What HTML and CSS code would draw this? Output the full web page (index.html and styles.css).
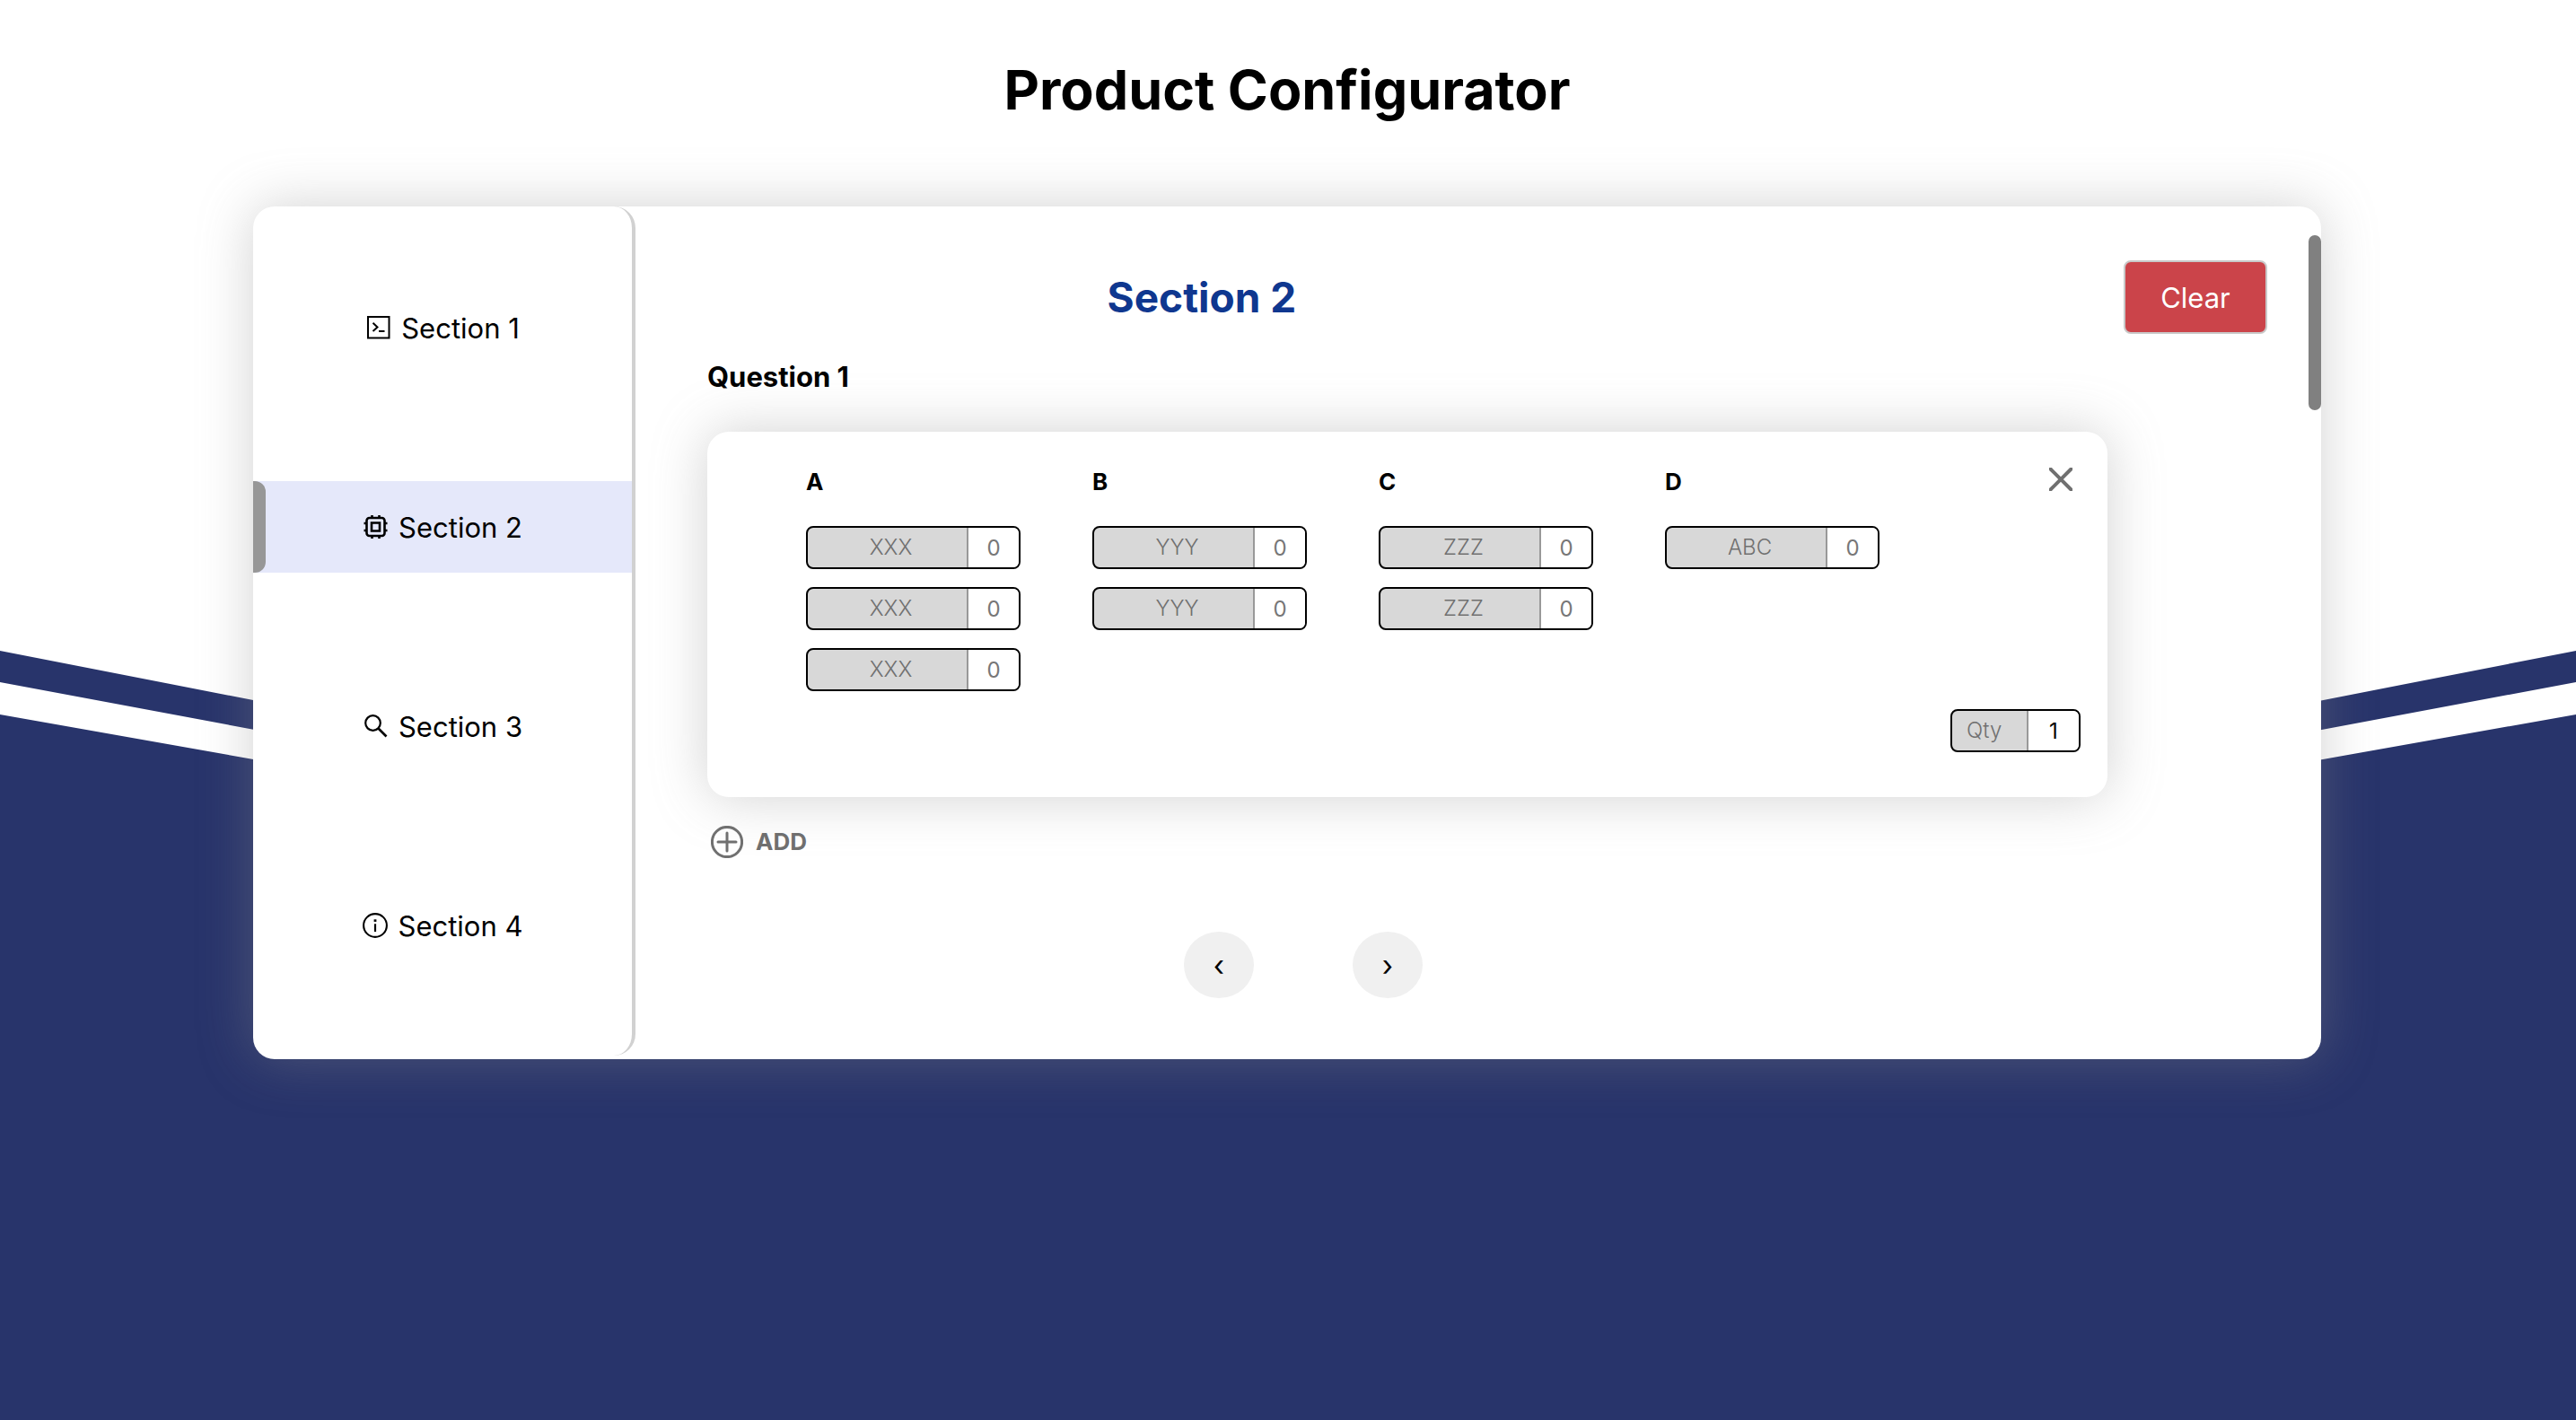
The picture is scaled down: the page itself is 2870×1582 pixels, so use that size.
FILE: index.html
```html
<!DOCTYPE html>
<html lang="en">
<head>
<meta charset="utf-8">
<meta name="viewport" content="width=device-width, initial-scale=1">
<title>Product Configurator</title>
<link rel="stylesheet" href="styles.css">
</head>
<body>
<svg class="backdrop" viewBox="0 0 2870 1582" preserveAspectRatio="none" aria-hidden="true">
  <path d="M0 725 1435 1005 2870 725V760L1435 1028 0 760ZM0 796 1435 1050 2870 796V1582H0Z"/>
</svg>
<main class="page">
  <h1 class="page-title">Product Configurator</h1>
  <div class="configurator">
    <nav class="sidebar" aria-label="Sections">
      <a class="nav-item" href="#section-1">
        <svg class="icon" viewBox="0 0 28 28"><path d="M3 2h23.500v23.500H3z" stroke-width="2"/><path d="M8.500 8.800 13.500 13.400 8.500 18" stroke-width="2"/><path d="M15 18h6.500" stroke-width="2"/></svg>
        Section 1
      </a>
      <a class="nav-item active" href="#section-2" aria-current="page">
        <svg class="icon" viewBox="0 0 28 28"><rect x="4.500" y="4" width="20" height="20" rx="3" stroke-width="2.600"/><path d="M10 9.500h9v9h-9z" stroke-width="2.600"/><path d="M10.500 1v3M18.500 1v3M10.500 24v3M18.500 24v3M1.500 10h3M1.500 18h3M24.500 10h3M24.500 18h3" stroke-width="2.600"/></svg>
        Section 2
      </a>
      <a class="nav-item" href="#section-3">
        <svg class="icon" viewBox="0 0 28 28"><circle cx="11.500" cy="10.500" r="8.300" stroke-width="2.200"/><path d="M17.500 16.500 26.500 25.500" stroke-width="2.600"/></svg>
        Section 3
      </a>
      <a class="nav-item" href="#section-4">
        <svg class="icon" viewBox="0 0 28 28"><circle cx="14" cy="14" r="12.900" stroke-width="2.100"/><path d="M14 12.300v8.700" stroke-width="2.200"/><path d="M14 7.300v2.600" stroke-width="2.800"/></svg>
        Section 4
      </a>
    </nav>

    <section class="content" id="section-2">
      <header class="content-header">
        <h2 class="section-title">Section 2</h2>
        <button class="clear-button" type="button">Clear</button>
      </header>

      <h3 class="question-title">Question 1</h3>
      <form class="question-card">
        <div class="card-top">
          <div class="group">
            <h4 class="group-title">A</h4>
            <div class="field"><label for="a1">XXX</label><input id="a1" type="text" placeholder="0"></div>
            <div class="field"><label for="a2">XXX</label><input id="a2" type="text" placeholder="0"></div>
            <div class="field"><label for="a3">XXX</label><input id="a3" type="text" placeholder="0"></div>
          </div>
          <div class="group">
            <h4 class="group-title">B</h4>
            <div class="field"><label for="b1">YYY</label><input id="b1" type="text" placeholder="0"></div>
            <div class="field"><label for="b2">YYY</label><input id="b2" type="text" placeholder="0"></div>
          </div>
          <div class="group">
            <h4 class="group-title">C</h4>
            <div class="field"><label for="c1">ZZZ</label><input id="c1" type="text" placeholder="0"></div>
            <div class="field"><label for="c2">ZZZ</label><input id="c2" type="text" placeholder="0"></div>
          </div>
          <div class="group">
            <h4 class="group-title">D</h4>
            <div class="field"><label for="d1">ABC</label><input id="d1" type="text" placeholder="0"></div>
          </div>
          <button class="close-button" type="button" aria-label="Remove">
            <svg viewBox="0 0 26 26"><path d="M1.500 1.500 24.500 24.500M24.500 1.500 1.500 24.500"/></svg>
          </button>
        </div>
        <div class="field quantity"><label for="qty">Qty</label><input id="qty" type="text" value="1"></div>
      </form>

      <button class="add-button" type="button">
        <svg viewBox="0 0 36 36" aria-hidden="true"><circle cx="18" cy="18" r="16.600"/><path d="M18 8v20M8 18h20"/></svg>
        ADD
      </button>

      <div class="pager">
        <button type="button" aria-label="Previous">‹</button>
        <button type="button" aria-label="Next">›</button>
      </div>
    </section>
    <div class="scroll-thumb"></div>
  </div>
</main>
</body>
</html>
```

FILE: styles.css
```css
* {
  box-sizing: border-box;
}

body {
  margin: 0;
  position: relative;
  min-height: 100vh;
  background: #fff;
  color: #000;
  font-family: Inter, "Liberation Sans", sans-serif;
}

h1, h2, h3, h4 {
  margin: 0;
}

button, input {
  font-family: inherit;
}

button {
  cursor: pointer;
}

.backdrop {
  position: absolute;
  inset: 0;
  width: 100%;
  height: 100%;
  z-index: -1;
  fill: #28346b;
}

.page {
  padding: 60px 284px 60px 282px;
}

.page-title {
  margin-bottom: 90px;
  font-size: 61px;
  line-height: 80px;
  font-weight: 700;
  text-align: center;
}

.configurator {
  position: relative;
  display: flex;
  border-radius: 24px;
  background: #fff;
  box-shadow: 0 0 60px rgba(139, 139, 139, 0.39);
}

.sidebar {
  flex: none;
  display: flex;
  flex-direction: column;
  gap: 120px;
  width: 426px;
  margin-bottom: 4px;
  padding-top: 84px;
  border-right: 4px solid #d1d1d1;
  border-radius: 24px;
}

.nav-item {
  display: flex;
  align-items: center;
  justify-content: center;
  gap: 12px;
  height: 102px;
  color: #000;
  font-size: 31px;
  text-decoration: none;
}

.nav-item.active {
  position: relative;
  background: #e5e8fa;
}

.nav-item.active::before {
  content: "";
  position: absolute;
  inset: 0 auto 0 0;
  width: 14px;
  border-radius: 0 12px 12px 0;
  background: #979797;
}

.icon {
  width: 28px;
  height: 28px;
  fill: none;
  stroke: #000;
}

.content {
  flex: 1;
  display: flex;
  flex-direction: column;
  align-items: flex-start;
  padding: 60px 60px 68px 80px;
}

.content-header {
  display: flex;
  align-items: center;
  justify-content: space-between;
  width: 100%;
  margin-bottom: 28px;
}

.section-title {
  width: 68%;
  padding-right: 80px;
  color: #0f378f;
  font-size: 46px;
  line-height: 60px;
  font-weight: 700;
  text-align: center;
}

.clear-button {
  width: 160px;
  height: 82px;
  border: 2px solid #c9c9c9;
  border-radius: 8px;
  background: #cb444a;
  color: #fff;
  font-size: 31px;
}

.question-title {
  margin-bottom: 41px;
  font-size: 31px;
  line-height: 40px;
  font-weight: 700;
}

.question-card {
  width: 1560px;
  max-width: 100%;
  padding: 40px 30px 50px 110px;
  border-radius: 24px;
  background: #fff;
  box-shadow: 0 0 60px rgba(139, 139, 139, 0.39);
}

.card-top {
  display: flex;
  align-items: flex-start;
  gap: 80px;
}

.group {
  display: flex;
  flex-direction: column;
  gap: 20px;
  width: 239px;
}

.group-title {
  margin-bottom: 14px;
  font-size: 26px;
  line-height: 31px;
  font-weight: 700;
}

.field {
  display: flex;
  height: 48px;
  border: 2px solid #000;
  border-radius: 8px;
  background: #d8d8d8;
  overflow: hidden;
  font-size: 24px;
}

.field label {
  flex: 1;
  border-right: 2px solid #999;
  color: #707070;
  font-weight: 300;
  line-height: 44px;
  padding-left: 8px;
  text-align: center;
}

.field input {
  width: 56px;
  padding: 0;
  border: 0;
  background: #fff;
  color: #000;
  font-size: 24px;
  text-align: center;
}

.field input::placeholder {
  color: #777;
  opacity: 1;
}

.quantity {
  width: 145px;
  margin: 20px 0 0 auto;
}

.quantity label {
  padding-left: 16px;
  text-align: left;
}

.close-button {
  width: 44px;
  height: 26px;
  margin-left: auto;
  padding: 0;
  border: 0;
  background: none;
}

.close-button svg {
  display: block;
  width: 26px;
  height: 26px;
  margin: 0 auto;
  stroke: #707070;
  stroke-width: 4;
  stroke-linecap: round;
}

.add-button {
  display: flex;
  align-items: center;
  gap: 14px;
  margin: 32px 0 82px 4px;
  padding: 0;
  border: 0;
  background: none;
  color: #6f6f6f;
  font-size: 26px;
  line-height: 36px;
  font-weight: 700;
}

.add-button svg {
  width: 36px;
  height: 36px;
  fill: none;
  stroke: #707070;
  stroke-width: 3;
  stroke-linecap: round;
}

.pager {
  display: flex;
  justify-content: center;
  gap: 110px;
  width: 100%;
  padding-right: 410px;
}

.pager button {
  width: 78px;
  height: 74px;
  padding: 0;
  border: 0;
  border-radius: 50%;
  background: #f0f0f0;
  color: #000;
  font-size: 32px;
}

.scroll-thumb {
  position: absolute;
  top: 32px;
  right: 0;
  width: 14px;
  height: 195px;
  border-radius: 7px;
  background: #808080;
}
```
